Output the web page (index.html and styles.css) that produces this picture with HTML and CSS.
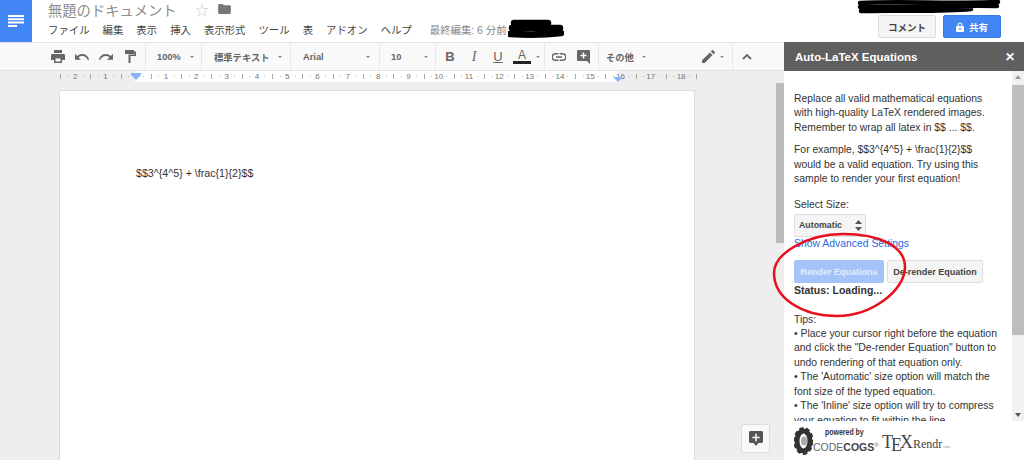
FILE: index.html
```html
<!DOCTYPE html>
<html lang="ja">
<head>
<meta charset="utf-8">
<title>無題のドキュメント</title>
<link rel="stylesheet" href="styles.css">
</head>
<body>
<div class="app">
  <header class="top">
    <div class="logo">
      <svg width="16" height="12" viewBox="0 0 16 12"><path d="M0 0h16v2H0zM0 3.300h16v2H0zM0 6.600h16v2H0zM0 10h9v2H0z" fill="#fff"/></svg>
    </div>
    <div class="titles">
      <div class="title-row">
        <span class="doc-title">無題のドキュメント</span>
        <span class="star">☆</span>
        <svg class="folder" width="13" height="10" viewBox="0 0 14 11"><path d="M0 1.200C0 .5.600 0 1.400 0H5l1.400 1.400h6.200c.8 0 1.400.6 1.400 1.300v7c0 .7-.6 1.300-1.400 1.300H1.400C.6 11 0 10.400 0 9.700z" fill="#777"/></svg>
      </div>
      <nav class="menu">
        <span>ファイル</span><span>編集</span><span>表示</span><span>挿入</span><span>表示形式</span><span>ツール</span><span>表</span><span>アドオン</span><span>ヘルプ</span>
        <span class="saved">最終編集: 6 分前</span>
      </nav>
    </div>
    <div class="actions">
      <button class="btn-comment">コメント</button>
      <button class="btn-share">
        <svg width="8" height="10" viewBox="0 0 9 11"><path d="M1 4.500h.8V3a2.700 2.700 0 0 1 5.400 0v1.500H8a1 1 0 0 1 1 1V10a1 1 0 0 1-1 1H1a1 1 0 0 1-1-1V5.500a1 1 0 0 1 1-1zM3 4.500h3V3a1.500 1.500 0 0 0-3 0zM4.500 6.500a1.100 1.100 0 1 0 0 2.200 1.100 1.100 0 0 0 0-2.200z" fill="#fff" fill-rule="evenodd"/></svg>
        共有
      </button>
    </div>
  </header>
  <div class="body">
    <div class="left">
      <div class="toolbar">
        <div class="group g-print">
          <svg width="14" height="13" viewBox="0 0 14 13"><path d="M3 0h8v3H3zM1.500 4h11c.8 0 1.500.7 1.500 1.500V10h-3v3H3v-3H0V5.500C0 4.700.7 4 1.500 4zM4.500 8.500v3h5v-3z" fill="#666" fill-rule="evenodd"/></svg>
          <svg width="14" height="8" viewBox="0 0 14 8"><path d="M13 7.500C12 4.500 9.800 3 7.300 3 5.800 3 4.600 3.500 3.600 4.400L6 6.800H0V.8l2.200 2.200C3.500 1.800 5.300 1 7.300 1c3.400 0 5.800 2 6.700 5.200z" fill="#666"/></svg>
          <svg width="14" height="8" viewBox="0 0 14 8"><path d="M1 7.500C2 4.500 4.200 3 6.700 3c1.500 0 2.700.5 3.700 1.400L8 6.800h6V.8l-2.200 2.200C10.500 1.800 8.700 1 6.700 1 3.300 1 .9 3 0 6.200z" fill="#666"/></svg>
          <svg class="paint" width="11" height="13" viewBox="0 0 11 13"><path d="M0 0h9v1.500h2V6H5.500v7h-2V4.500h5.800V3H9v1H0z" fill="#666"/></svg>
        </div>
        <div class="group g-zoom"><span class="sel">100%</span><i class="caret"></i></div>
        <div class="group g-style"><span class="sel">標準テキスト</span><i class="caret"></i></div>
        <div class="group g-font"><span class="sel">Arial</span><i class="caret"></i></div>
        <div class="group g-size"><span class="sel">10</span><i class="caret"></i></div>
        <div class="group g-format">
          <b class="fmt">B</b><i class="fmt it">I</i><u class="fmt un">U</u>
          <span class="color"><span class="fmt cl">A</span></span><i class="caret"></i>
        </div>
        <div class="group g-insert">
          <svg width="14" height="8" viewBox="0 0 14 8"><path d="M3.600 0h2.800v1.400H3.600a2.600 2.600 0 0 0 0 5.200h2.800V8H3.600a4 4 0 0 1 0-8zM7.600 0h2.800a4 4 0 0 1 0 8H7.600V6.600h2.800a2.600 2.600 0 0 0 0-5.200H7.600zM4 3.300h6v1.400H4z" fill="#666"/></svg>
          <svg width="13" height="14" viewBox="0 0 13 14"><path d="M1 0h11a1 1 0 0 1 1 1v13l-3-3H1a1 1 0 0 1-1-1V1a1 1 0 0 1 1-1zM5.700 2.500v2.300H3.400v1.500h2.300v2.300h1.600V6.300h2.300V4.800H7.300V2.500z" fill="#666" fill-rule="evenodd"/></svg>
        </div>
        <div class="group g-more"><span class="sel">その他</span><i class="caret"></i></div>
        <div class="group g-pen">
          <svg width="13" height="13" viewBox="0 0 13 13"><path d="M0 10.300V13h2.700l7.900-7.900-2.700-2.700zM12.800 2.900a.7.700 0 0 0 0-1L11.100.2a.7.700 0 0 0-1 0L8.800 1.500l2.700 2.700z" fill="#666"/></svg>
          <i class="caret"></i>
        </div>
        <div class="group g-collapse">
          <svg width="10" height="7" viewBox="0 0 10 7"><path d="M1 6l4-4 4 4" fill="none" stroke="#666" stroke-width="1.800"/></svg>
        </div>
      </div>
      <div class="ruler">
        <div class="ruler-page">
          <span>2</span><span>1</span><span class="zero"></span><span>1</span><span>2</span><span>3</span><span>4</span><span>5</span><span>6</span><span>7</span><span>8</span><span>9</span><span>10</span><span>11</span><span>12</span><span>13</span><span>14</span><span>15</span><span>16</span><span>17</span><span>18</span>
        </div>
        <i class="marker m-left"></i>
        <i class="marker m-right"></i>
      </div>
      <div class="canvas">
        <div class="page"><p class="doc-text">$$3^{4^5} + \frac{1}{2}$$</p></div>
        <div class="doc-scroll"><div class="doc-thumb"></div></div>
        <div class="float-btn">
          <svg width="14" height="15" viewBox="0 0 14 15"><path d="M1.500 0h11c.8 0 1.500.7 1.500 1.500v9c0 .8-.7 1.500-1.500 1.500H9.500L7 15l-2.500-3h-3C.7 12 0 11.300 0 10.500v-9C0 .7.700 0 1.500 0zM6.200 2.800v2.900H3.300v1.600h2.900v2.900h1.600V7.300h2.900V5.700H7.800V2.800z" fill="#555" fill-rule="evenodd"/></svg>
        </div>
      </div>
    </div>
    <aside class="panel">
      <div class="panel-head"><span>Auto-LaTeX Equations</span><span class="close">✕</span></div>
      <div class="panel-main">
        <div class="panel-text">
          <p>Replace all valid mathematical equations with high-quality LaTeX rendered images. Remember to wrap all latex in $$ ... $$.</p>
          <p>For example, $$3^{4^5} + \frac{1}{2}$$ would be a valid equation. Try using this sample to render your first equation!</p>
          <div class="lbl">Select Size:</div>
          <div class="select">Automatic<svg width="7" height="11" viewBox="0 0 7 11"><path d="M3.500 0L7 4H0zM3.500 11L0 7h7z" fill="#555"/></svg></div>
          <a class="adv">Show Advanced Settings</a>
          <div class="btns"><button class="render">Render Equations</button><button class="derender">De-render Equation</button></div>
          <div class="status">Status: Loading...</div>
          <div class="tips">Tips:<br>• Place your cursor right before the equation and click the "De-render Equation" button to undo rendering of that equation only.<br>• The 'Automatic' size option will match the font size of the typed equation.<br>• The 'Inline' size option will try to compress your equation to fit within the line.</div>
        </div>
        <div class="panel-scroll"><i class="up"></i><div class="panel-thumb"></div><i class="down"></i></div>
      </div>
      <div class="powered">
        <svg class="gear" width="19" height="28" viewBox="0 0 19 28"><ellipse cx="9.500" cy="14" rx="6.500" ry="10" fill="none" stroke="#333" stroke-width="5"/><ellipse cx="9.500" cy="14" rx="8.500" ry="12.500" fill="none" stroke="#333" stroke-width="3" stroke-dasharray="4 2.500"/><ellipse cx="10" cy="14" rx="3" ry="4.500" fill="#aaa"/></svg>
        <div class="cogs"><span class="pw">powered by</span><span class="cc">CODE<b>COGS</b><sup>®</sup></span></div>
        <span class="tex">T<span class="tex-e">E</span>X<span class="rendr">Rendr<small>.com</small></span></span>
      </div>
    </aside>
  </div>
  <svg class="scribble s2" width="144" height="15" viewBox="0 0 144 15"><path d="M3 3c40-2 90 1 138-1M3 7c40 1 90-2 137-1M4 11c40-1 80 1 110-2" fill="none" stroke="#000" stroke-width="4.500" stroke-linecap="round"/></svg>
  <svg class="scribble s3" width="56" height="20" viewBox="0 0 56 20"><path d="M6 4h34M4 9h48M2 15c15 1 35 1 51-1" fill="none" stroke="#000" stroke-width="6.500" stroke-linecap="round"/></svg>
  <svg class="ellipse" width="136" height="86" viewBox="0 0 136 86"><path d="M2 41C2 21 36 2 71 2c36 0 62 12 62 33 0 24-34 49-68 49C31 84 2 67 2 41z" fill="none" stroke="#e8101f" stroke-width="2.500"/></svg>
</div>
</body>
</html>
```
FILE: styles.css
```css
* { box-sizing: border-box; }
html, body { margin: 0; height: 100%; overflow: hidden; background: #fff; }
body { font-family: "Liberation Sans", "Noto Sans CJK JP", sans-serif; color: #333; }
.app { position: relative; width: 1024px; height: 460px; overflow: hidden; display: flex; flex-direction: column; }

.top { height: 42px; display: flex; flex: none; }
.logo { width: 32px; height: 42px; background: #4285f4; display: flex; align-items: center; justify-content: center; }
.titles { flex: 1; padding-left: 16px; min-width: 0; }
.title-row { height: 18px; display: flex; align-items: center; }
.doc-title { font-size: 14.300px; color: #8d8d8d; width: 147px; white-space: nowrap; }
.star { font-size: 14px; color: #ccc; width: 23px; }
.menu { display: flex; height: 23px; align-items: center; font-size: 10.400px; color: #444; white-space: nowrap; }
.menu span { margin-right: 13px; }
.menu .saved { margin-left: 5px; color: #888; }
.actions { display: flex; align-items: flex-start; gap: 7px; padding: 15px 23px 0 0; }
.actions button { height: 23px; border-radius: 2px; font: bold 9.500px "Liberation Sans", "Noto Sans CJK JP", sans-serif; padding: 0; }
.btn-comment { width: 58px; background: #f5f5f5; border: 1px solid #dcdcdc; color: #444; }
.btn-share { width: 58px; background: #4285f4; border: 1px solid #3b78e7; color: #fff; display: flex; align-items: center; justify-content: center; gap: 5px; }

.body { flex: 1; display: flex; min-height: 0; }
.left { width: 784px; display: flex; flex-direction: column; min-width: 0; }
.toolbar { height: 29px; flex: none; background: #f9f9f9; border-top: 1px solid #e3e3e3; border-bottom: 1px solid #e3e3e3; display: flex; }
.group { height: 100%; display: flex; align-items: center; border-right: 1px solid #e8e8e8; flex: none; }
.g-print { width: 146px; padding-left: 51px; gap: 10px; }
.paint { margin-left: 2px; }
.g-zoom { width: 56px; padding-left: 11px; }
.g-zoom .caret { margin-left: 9px; }
.g-style { width: 89px; padding-left: 12px; }
.g-style .caret { margin-left: 8px; }
.g-font { width: 89px; padding-left: 12px; }
.g-font .caret { margin-left: 42px; }
.g-size { width: 56px; padding-left: 11px; }
.g-size .caret { margin-left: 23px; }
.g-format { width: 109px; padding-left: 2px; }
.g-insert { width: 54px; padding-left: 7px; gap: 11px; }
.g-more { width: 100px; padding-left: 7px; border-right: 0; }
.g-pen { width: 34px; padding-left: 3px; gap: 5px; }
.g-collapse { border-right: 0; padding-left: 9px; }
.sel { font-size: 9.300px; font-weight: bold; color: #666; white-space: nowrap; }
.caret { display: inline-block; width: 0; height: 0; border: 2px solid transparent; border-top: 2px solid #888; border-bottom: 0; margin-left: 8px; }
.g-pen .caret { margin-left: 0; }
.fmt { font-size: 13px; color: #666; font-style: normal; width: 24px; text-align: center; display: inline-block; text-decoration: none; }
.fmt.it { font-family: "Liberation Serif", serif; font-style: italic; font-size: 14px; }
.fmt.un { text-decoration: underline; font-weight: normal; }
.color { width: 24px; text-align: center; }
.fmt.cl { width: 18px; display: block; border-bottom: 3px solid #222; line-height: 12px; margin: 0 auto; font-size: 12px; }
.g-format .caret { margin-left: 2px; }

.ruler { height: 11px; flex: none; position: relative; background: linear-gradient(#aaa, #aaa) 696px 3px / 1px 5px no-repeat, linear-gradient(to right, #eee 0 135px, #fff 135px 618px, #eee 618px); }
.ruler-page { margin-left: 60px; width: 636px; height: 11px; display: flex; font-size: 8px; color: #777; line-height: 11px; }
.ruler-page span { width: 30.300px; flex: none; text-align: center; background: linear-gradient(#aaa, #aaa) left 3px / 1px 5px no-repeat, linear-gradient(#bbb, #bbb) 7.500px 5px / 1px 1px no-repeat, linear-gradient(#bbb, #bbb) 22.700px 5px / 1px 1px no-repeat; }
.marker { position: absolute; width: 0; height: 0; border: 5px solid transparent; border-top: 5px solid #8ab4f8; border-bottom: 0; }
.m-left { left: 131px; top: 4px; }
.m-left::before { content: ""; position: absolute; left: -5px; top: -7px; width: 10px; height: 2px; background: #8ab4f8; }
.m-right { left: 613px; top: 6px; }

.canvas { flex: 1; background: #eee; display: flex; position: relative; min-height: 0; padding: 8px 0 0 59px; }
.page { width: 636px; background: #fff; border: 1px solid #ddd; height: 400px; flex: none; }
.doc-text { margin: 76px 0 0 76px; font-size: 10.650px; color: #333; }
.doc-scroll { position: absolute; right: 0; top: 0; bottom: 0; width: 8px; background: #eee; }
.doc-thumb { height: 160px; width: 8px; background: #bbb; margin-top: 1px; }
.float-btn { position: absolute; left: 741px; top: 342px; width: 29px; height: 29px; background: #f9f9f9; border: 1px solid #ddd; border-radius: 2px; display: flex; align-items: center; justify-content: center; }

.panel { width: 240px; flex: none; display: flex; flex-direction: column; background: #fff; }
.panel-head { height: 29px; flex: none; background: #5f5f5f; color: #fff; font-size: 11.500px; font-weight: bold; display: flex; align-items: center; justify-content: space-between; padding: 0 9px 0 11px; }
.close { font-size: 12px; }
.panel-main { flex: 1; display: flex; min-height: 0; overflow: hidden; }
.panel-text { width: 228px; flex: none; padding: 21px 0 0 10px; font-size: 10.400px; line-height: 14.400px; color: #333; overflow: hidden; }
.panel-text p { margin: 0 0 8px; width: 206px; }
.lbl { margin: 12px 0 1px; }
.select { width: 72px; height: 23px; background: #f5f5f5; border: 1px solid #ddd; border-radius: 2px; font-size: 8.800px; font-weight: bold; color: #444; display: flex; align-items: center; justify-content: space-between; padding: 0 3px 0 4px; }
.select svg { flex: none; }
.adv { display: block; color: #2a6ade; }
.btns { display: flex; gap: 3px; margin-top: 9px; }
.btns button { height: 23px; font: bold 9px "Liberation Sans", sans-serif; border-radius: 2px; padding: 0; }
.render { width: 90px; background: #a3c3f9; border: 1px solid #a3c3f9; color: #e4edfc; }
.derender { width: 96px; background: #f5f5f5; border: 1px solid #ddd; color: #444; }
.status { font-weight: bold; font-size: 10.500px; }
.tips { margin-top: 15px; width: 206px; }
.panel-scroll { width: 12px; background: #f1f1f1; position: relative; flex: none; }
.panel-thumb { width: 12px; height: 250px; background: #bdbdbd; margin-top: 14px; }
.up, .down { position: absolute; left: 3px; width: 0; height: 0; border: 3px solid transparent; }
.up { top: 4px; border-bottom: 4px solid #999; border-top: 0; }
.down { bottom: 4px; border-top: 4px solid #555; border-bottom: 0; }

.powered { height: 39px; flex: none; display: flex; align-items: center; padding-left: 10px; background: #fff; }
.gear { flex: none; }
.cogs { display: flex; flex-direction: column; width: 69px; }
.pw { font-size: 8.500px; font-weight: bold; margin-left: 12px; line-height: 9px; color: #333; white-space: nowrap; transform: scaleX(.82); transform-origin: left; }
.cc { font-size: 10.500px; color: #666; line-height: 11px; margin-top: 5px; white-space: nowrap; }
.cc b { color: #444; }
.cc sup { font-size: 6px; line-height: 0; }
.tex { font-family: "Liberation Serif", serif; font-size: 18px; line-height: 20px; color: #444; white-space: nowrap; margin-top: 8px; }
.tex-e { position: relative; top: 3px; margin: 0 -2px; }
.rendr { font-size: 12px; }
.rendr small { font-size: 4px; color: #999; }

.scribble { position: absolute; }
.s2 { left: 857px; top: 0; }
.s3 { left: 508px; top: 19px; }
.ellipse { position: absolute; left: 772px; top: 232px; }
```
